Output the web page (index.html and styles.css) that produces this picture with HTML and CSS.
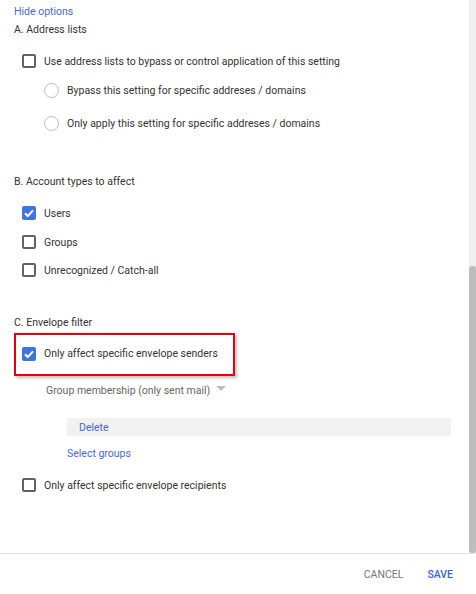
FILE: index.html
```html
<!DOCTYPE html>
<html>
<head>
<meta charset="utf-8">
<link rel="stylesheet" href="styles.css">
</head>
<body>
<div class="dialog">
  <div class="scroll-area">
    <div class="content">
      <a class="link hide">Hide options</a>
      <div class="heading h-a">A. Address lists</div>
      <div class="row cb-row r-use">
        <span class="cb"></span>
        <span class="label">Use address lists to bypass or control application of this setting</span>
      </div>
      <div class="row radio-row r-bypass">
        <span class="radio"></span>
        <span class="label">Bypass this setting for specific addreses / domains</span>
      </div>
      <div class="row radio-row r-only">
        <span class="radio"></span>
        <span class="label">Only apply this setting for specific addreses / domains</span>
      </div>

      <div class="heading h-b">B. Account types to affect</div>
      <div class="row cb-row r-users">
        <span class="cb checked"><svg viewBox="0 0 14 14" width="14" height="14"><path d="M3 7.2 L5.8 10 L11 4.4" fill="none" stroke="#fff" stroke-width="2"/></svg></span>
        <span class="label">Users</span>
      </div>
      <div class="row cb-row r-groups">
        <span class="cb"></span>
        <span class="label">Groups</span>
      </div>
      <div class="row cb-row r-unrec">
        <span class="cb"></span>
        <span class="label">Unrecognized / Catch-all</span>
      </div>

      <div class="heading h-c">C. Envelope filter</div>
      <div class="highlight">
        <div class="row cb-row r-senders">
          <span class="cb checked"><svg viewBox="0 0 14 14" width="14" height="14"><path d="M3 7.2 L5.8 10 L11 4.4" fill="none" stroke="#fff" stroke-width="2"/></svg></span>
          <span class="label">Only affect specific envelope senders</span>
        </div>
      </div>
      <div class="select">
        <span class="select-text">Group membership (only sent mail)</span>
        <span class="caret"></span>
      </div>
      <div class="chip-bar"><a class="link">Delete</a></div>
      <a class="link select-groups">Select groups</a>
      <div class="row cb-row r-recip">
        <span class="cb"></span>
        <span class="label">Only affect specific envelope recipients</span>
      </div>
    </div>
    <div class="scrollbar"><div class="thumb"></div></div>
  </div>
  <div class="footer">
    <span class="btn cancel">CANCEL</span>
    <span class="btn save">SAVE</span>
  </div>
</div>
</body>
</html>
```

FILE: styles.css
```css
* { box-sizing: border-box; }
html, body { margin: 0; padding: 0; background: #fff; }
body {
  width: 476px;
  height: 594px;
  overflow: hidden;
  font-family: Roboto, "Liberation Sans", Arial, sans-serif;
  font-size: 10.5px;
  color: #222;
}
.dialog { display: flex; flex-direction: column; width: 476px; height: 594px; }
.scroll-area {
  display: flex;
  height: 554px;
  border-bottom: 1px solid #e0e0e0;
}
.content {
  flex: 1;
  display: flex;
  flex-direction: column;
  align-items: flex-start;
  padding-left: 14px;
}
.scrollbar {
  width: 7px;
  background: #efefef;
  display: flex;
  flex-direction: column;
  justify-content: flex-end;
}
.thumb {
  height: 287px;
  background: #bdbdbd;
  border-radius: 3px;
}
.link { color: #4a67d8; text-decoration: none; line-height: 16px; }
.hide { margin-top: 4px; }
.heading { line-height: 16px; color: #333; }
.h-a { margin-top: 2px; }
.h-b { margin-top: 41px; }
.h-c { margin-top: 35px; }
.row { display: flex; align-items: center; height: 20px; }
.cb-row { padding-left: 8px; }
.radio-row { padding-left: 30px; }
.label { color: #333; white-space: nowrap; }
.cb {
  width: 14px;
  height: 14px;
  border: 2px solid #5f6368;
  border-radius: 2px;
  margin-right: 8px;
  flex: none;
  display: flex;
}
.cb.checked { background: #3f73e0; border-color: #3f73e0; }
.cb.checked svg { margin: -2px; }
.radio {
  width: 15px;
  height: 15px;
  border: 1px solid #bdbdbd;
  border-radius: 50%;
  margin-right: 8px;
  flex: none;
}
.r-use { margin-top: 13px; }
.r-bypass { margin-top: 9px; }
.r-only { margin-top: 13px; }
.r-users { margin-top: 13px; }
.r-groups { margin-top: 9px; }
.r-unrec { margin-top: 8px; }
.highlight {
  margin-top: 2px;
  width: 221px;
  height: 43px;
  border: 2px solid #e5000f;
  box-shadow: 2px 2px 3px rgba(0,0,0,0.25);
  display: flex;
  align-items: center;
}
.highlight .cb-row { padding-left: 6px; margin-top: -2px; }
.select {
  margin-top: 4px;
  margin-left: 32px;
  height: 20px;
  display: flex;
  align-items: center;
  color: #666;
}
.caret {
  margin-left: 6px;
  width: 0;
  height: 0;
  border-left: 5px solid transparent;
  border-right: 5px solid transparent;
  border-top: 5px solid #bdbdbd;
  margin-top: -4px;
}
.chip-bar {
  margin-top: 18px;
  margin-left: 53px;
  width: 384px;
  height: 18px;
  background: #f1f1f1;
  display: flex;
  align-items: center;
  padding-left: 12px;
  padding-top: 1px;
}
.select-groups { margin-top: 10px; margin-left: 53px; }
.r-recip { margin-top: 13px; }
.footer {
  flex: 1;
  display: flex;
  justify-content: flex-end;
  align-items: center;
  padding-right: 23px;
  gap: 24px;
}
.btn { font-size: 10.5px; font-weight: 500; }
.cancel { color: #757575; font-weight: 400; }
.save { color: #3367d6; }
```
